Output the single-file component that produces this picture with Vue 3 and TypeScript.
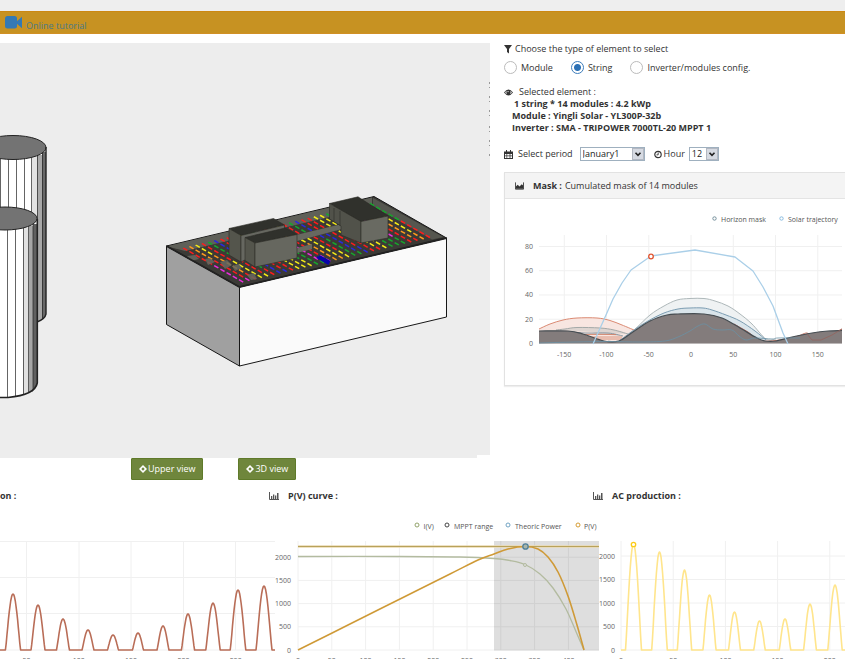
<script setup lang="ts">
import { ref } from 'vue'

type Point = [number, number]
interface Peak { x: number; top: number; half: number }

const elementType = ref('string')
const period = ref('January1')
const hour = ref('12')

const types = [
  { value: 'module', label: 'Module' },
  { value: 'string', label: 'String' },
  { value: 'inverter', label: 'Inverter/modules config.' },
]

// Smooth path through points (Catmull-Rom converted to Bezier segments)
function smooth(pts: Point[]): string {
  let d = `M${pts[0][0]} ${pts[0][1]}`
  for (let i = 0; i < pts.length - 1; i++) {
    const a = pts[Math.max(i - 1, 0)]
    const b = pts[i]
    const c = pts[i + 1]
    const e = pts[Math.min(i + 2, pts.length - 1)]
    d += `C${b[0] + (c[0] - a[0]) / 6} ${b[1] + (c[1] - a[1]) / 6} ${c[0] - (e[0] - b[0]) / 6} ${c[1] - (e[1] - b[1]) / 6} ${c[0]} ${c[1]}`
  }
  return d
}

function production(start: number, end: number, base: number, peaks: Peak[]): string {
  let d = `M${start} ${base}`
  for (const p of peaks) {
    for (let k = -10; k <= 10; k++) {
      const t = k / 10
      const level = Math.pow(Math.max(Math.cos((t * Math.PI) / 2), 0), 1.15)
      d += `L${(p.x + t * p.half).toFixed(1)} ${(base - level * (base - p.top)).toFixed(1)}`
    }
  }
  return d + `L${end} ${base}`
}

const dcPath = production(0, 275, 650, [
  { x: 13, top: 594, half: 7.6 }, { x: 38, top: 605, half: 7 }, { x: 63, top: 619, half: 6.5 },
  { x: 88, top: 630, half: 6 }, { x: 113, top: 635, half: 5.6 }, { x: 138, top: 633, half: 5.6 },
  { x: 163, top: 626, half: 6 }, { x: 188, top: 614, half: 6.6 }, { x: 213, top: 603, half: 7.2 },
  { x: 238, top: 590, half: 7.8 }, { x: 264, top: 586, half: 8 },
])
const acPath = production(621, 845, 650, [
  { x: 633.5, top: 544, half: 8 }, { x: 659.5, top: 552, half: 7.8 }, { x: 684.5, top: 570, half: 7.2 },
  { x: 709.5, top: 595, half: 6.6 }, { x: 734.5, top: 612, half: 6 }, { x: 759.5, top: 621, half: 5.8 },
  { x: 785, top: 619, half: 5.8 }, { x: 810, top: 604, half: 6.4 }, { x: 835, top: 585, half: 7.2 },
])

const wattTicks = [0, 500, 1000, 1500, 2000]
const maskX = (v: number) => 691 + v * 0.845
const maskY = (v: number) => 343.5 - v * 1.213
const maskXTicks = [-150, -100, -50, 0, 50, 100, 150]
const maskYTicks = [0, 20, 40, 60, 80]

const darkMask = smooth([[539, 331], [568, 331], [583, 334], [604, 341], [619, 341], [630, 334], [650, 321], [667, 315], [678, 314], [704, 314], [722, 318], [740, 328], [757, 338], [765, 341], [776, 341], [792, 337], [812, 333], [828, 331], [842, 330.5]])
const grayMask = smooth([[608, 341], [619, 341], [634, 330], [650, 315], [664, 306], [677, 300], [690, 298.5], [704, 298.5], [715, 301], [728, 306], [740, 314], [752, 324], [766, 339], [776, 339]])
const blueMask = smooth([[619, 341], [634, 330], [648, 321], [664, 313], [678, 309], [690, 308], [703, 308], [712, 310], [726, 315], [740, 321], [755, 331], [766, 340]])
const orangeMask = smooth([[539, 329], [550, 324], [563, 320], [577, 318], [597, 318], [610, 320.5], [622, 325], [634, 330]])
const leftGray = smooth([[556, 330], [565, 329], [577, 327.5], [600, 328], [614, 330], [628, 334]])
const leftBlue = smooth([[560, 331], [585, 333], [608, 333], [623, 336]])
const lowTrack = smooth([[539, 343], [575, 342], [608, 341.5], [640, 342], [665, 341], [678, 337], [690, 331], [698, 326], [705, 324], [713, 329], [722, 330], [732, 330], [739, 336], [746, 340], [755, 338], [772, 339], [778, 338], [800, 338]])
const rightOrange = smooth([[734, 324], [748, 332], [762, 341], [792, 338], [807, 333], [812, 339], [821, 339], [832, 334], [842, 329]])

const currentPath = smooth([[298, 556.5], [400, 556.5], [460, 557], [494, 558.5], [510, 560.5], [525, 564.5], [540, 574], [553, 588], [566, 609], [577, 634], [584, 650]])
const powerPath = smooth([[298, 650], [350, 624], [400, 599], [450, 574], [478, 560], [494, 554], [508, 549], [525, 546.5], [538, 549], [548, 557], [558, 572], [568, 596], [577, 625], [584, 650]])

// Photovoltaic strings laid out over the roof parallelogram
const red = '#ff1c1c', yellow = '#f7ee16', green = '#16a82c', pink = '#ee2be0', blue = '#2a28e0', orange = '#ff9a1e'
const order = [red, yellow, red, green, red, orange, yellow, green, pink, red, yellow, green, blue]
const panels: { x1: number; y1: number; x2: number; y2: number; color: string }[] = []
for (let i = 0; i < 31; i++) {
  for (let j = 0; j < 10; j++) {
    const u = 0.045 + i * 0.03
    const v = 0.1 + j * 0.085
    const x = 166.5 + u * 207.5 + v * 73
    const y = 246 - u * 49.5 + v * 41.5
    const color = order[(i * 5 + Math.floor((j + (i % 3)) / 5) * 8) % order.length]
    panels.push({ x1: x, y1: y, x2: x + 4.2, y2: y + 2.4, color })
  }
}
</script>

<template>
  <div class="page">
    <div class="topstrip"></div>
    <header class="bar">
      <a href="#" class="tutorial">
        <svg class="cam" viewBox="0 0 18 13" aria-hidden="true"><rect x="0" y="0" width="12" height="12.5" rx="2.5" /><path d="M11 6 17 .8V12.2L11 7z" /></svg>
        <span>Online tutorial</span>
      </a>
    </header>

    <main class="main">
      <svg class="viewer" viewBox="0 43 490 415">
        <path d="M0 43H490V455H477V458H0z" fill="#ededed" />
        <path d="M489.500 82V124M489.500 126V156" stroke="#999" stroke-dasharray="2 3 1 8" />
        <g stroke="#222">
          <path d="M-20 147H46V313Q45 319 37 322H-20z" fill="#fff" stroke="none" />
          <path d="M32 156H37V322H32z" fill="#e2e2e2" stroke="none" />
          <path d="M37 155H42V320L37 322z" fill="#a8a8a8" stroke="none" />
          <path d="M42 152H46V314L42 320z" fill="#686868" stroke="none" />
          <path d="M.5 158V215M8.500 159V220M16.500 159V220M24.500 158V220M31.500 157V240M37.500 155V322M42.500 152V319" stroke-width=".7" fill="none" />
          <ellipse cx="13" cy="147.500" rx="33" ry="12" fill="#737373" />
          <path d="M46 147V314Q45 319 37 322" fill="none" stroke-width="1.400" />
          <path d="M-20 219H37V384Q34 395 8 398H-20z" fill="#fff" stroke="none" />
          <path d="M23 228H29V394H23z" fill="#e1e1e1" stroke="none" />
          <path d="M29 226H33V392H29z" fill="#a6a6a6" stroke="none" />
          <path d="M33 224H37V384L33 391z" fill="#606060" stroke="none" />
          <path d="M7.500 230V397M15.500 229V396M23.500 228V394M28.500 226V392M33 224V390" stroke-width=".7" fill="none" />
          <ellipse cx="5" cy="218.500" rx="32" ry="11.500" fill="#737373" />
          <path d="M37.300 219V383Q35 395 8 397.500H-5" fill="none" stroke-width="1.600" />
        </g>
        <g stroke="#171717" stroke-linejoin="round">
          <path d="M166.500 246 239.500 287V366L166.500 324.500z" fill="#a0a0a0" />
          <path d="M239.500 287 446.500 238V317L239.500 366z" fill="#fafafa" />
          <path d="M166.500 246 374 196.500 446.500 238 239.500 287z" fill="#3b3a36" />
        </g>
        <path d="M168 246.500 372 198V207L185 251z" fill="#5f6059" />
        <path d="M373 198 443 237 432 239.500 373 206z" fill="#55564f" />
        <line v-for="(p, i) in panels" :key="i" :x1="p.x1" :y1="p.y1" :x2="p.x2" :y2="p.y2" :stroke="p.color" stroke-width="1.500" />
        <path d="M168 246 372 197.500V202L178 249z" fill="#5f6059" />
        <g fill="#676860">
          <path d="M187 256 195 255 199 259 191 261zM205 259 210 258 215 262 208 265zM220 262 227 260 232 265 225 269zM232 266 239 264 242 268 235 271zM247 275 254 273 257 279 251 280z" opacity=".85" />
          <path d="M296 235 342 224V229L297 241z" />
          <path d="M297 248 312 244V249L297 253z" />
        </g>
        <path d="M317 257 329 264M319 256 330 262" stroke="#0804a8" stroke-width="2.500" />
        <g stroke="#2b2c27" stroke-width=".6" stroke-linejoin="round">
          <path d="M229 228.500 273.500 218.500 284.500 225 241 235.500z" fill="#30312c" />
          <path d="M229 228.500 241 235.500V262L229 255z" fill="#54554c" />
          <path d="M241 235.500 284.500 225V240L241 262z" fill="#666760" />
          <path d="M245 237.500 285 228 297 234.500 255 243z" fill="#30312c" />
          <path d="M245 237.500 255 243V267L245 260.500z" fill="#54554c" />
          <path d="M255 243 297 234.500V258L255 267z" fill="#66675f" />
          <path d="M329.500 203.500 358 196.800 388 216 361 221.500z" fill="#30312c" />
          <path d="M329.500 203.500 361 221.500V243L341 235V226L329.500 219z" fill="#51524a" />
          <path d="M361 221.500 388 216V238L361 243z" fill="#696a62" />
          <path d="M334 208V221M340 211V226" />
        </g>
        <path d="M166.500 246 239.500 287 446.500 238" fill="none" stroke="#222" stroke-width="1.800" />
      </svg>

      <section class="side">
        <fieldset class="types">
          <legend>
            <svg class="ico filter" viewBox="0 0 8 9" aria-hidden="true"><path d="M0 0H8L5 4V8.500L3 7V4z" /></svg>Choose the type of element to select
          </legend>
          <div class="radios">
            <label v-for="t in types" :key="t.value">
              <input v-model="elementType" type="radio" name="type" :value="t.value" />{{ t.label }}
            </label>
          </div>
        </fieldset>

        <div class="selected">
          <p class="caption">
            <svg class="ico eye" viewBox="0 0 10 7" aria-hidden="true"><path d="M0 3.500Q5-3 10 3.500Q5 10 0 3.500z" /><path d="M1.300 3.500Q2 2.300 3 1.800Q2.200 3.600 3.300 5.300Q2 4.700 1.300 3.500zM8.700 3.500Q8 2.300 7 1.800Q7.800 3.600 6.700 5.300Q8 4.700 8.700 3.500z" fill="#fff" /><circle cx="4.500" cy="2.500" r=".7" fill="#fff" /></svg>Selected element :
          </p>
          <p class="first">1 string * 14 modules : 4.2 kWp</p>
          <p>Module : Yingli Solar - YL300P-32b</p>
          <p>Inverter : SMA - TRIPOWER 7000TL-20 MPPT 1</p>
        </div>

        <div class="when">
          <svg class="ico cal" viewBox="0 0 9 9" aria-hidden="true"><path d="M0 1.500H9V9H0zM2 0H3V2H2zM6 0H7V2H6z" /><path d="M1 4H2.500V5.500H1zM3.200 4H5.600V5.500H3.200zM6.400 4H8V5.500H6.400zM1 6.300H2.500V8H1zM3.200 6.300H5.600V8H3.200zM6.400 6.300H8V8H6.400z" fill="#fff" /></svg>
          <label for="period">Select period</label>
          <span class="picker">
            <select id="period" v-model="period" class="period"><option>January1</option></select>
            <svg viewBox="0 0 12 12" aria-hidden="true"><path d="M3 4.500 6 7.500 9 4.500" /></svg>
          </span>
          <svg class="ico clock" viewBox="0 0 9 9" aria-hidden="true"><circle cx="4.500" cy="4.500" r="3.600" fill="none" stroke="#333" stroke-width="1.300" /><path d="M4.700 2.200V4.900H2.800" fill="none" stroke="#333" /></svg>
          <label for="hour" class="hourlabel">Hour</label>
          <span class="picker">
            <select id="hour" v-model="hour" class="hour"><option>12</option></select>
            <svg viewBox="0 0 12 12" aria-hidden="true"><path d="M3 4.500 6 7.500 9 4.500" /></svg>
          </span>
        </div>

        <article class="panel">
          <h2>
            <svg class="ico pic" viewBox="0 0 10 8" aria-hidden="true"><path d="M.5 0V7.500H9.500V0" fill="none" stroke="#333" /><path d="M1 7V4.500L3 2.500 5 4.500 7.500 2 9 3.500V7z" /></svg>
            <b>Mask :</b><span>Cumulated mask of 14 modules</span>
          </h2>
          <svg class="chart" viewBox="505 199 340 186">
            <g class="grid">
              <path v-for="v in maskXTicks" :key="v" :d="`M${maskX(v)} 235V343`" />
              <path v-for="v in maskYTicks" :key="v" :d="`M539 ${maskY(v)}H842`" />
            </g>
            <g class="ticks">
              <text v-for="v in maskYTicks" :key="v" x="533" :y="maskY(v) + 2.500" text-anchor="end">{{ v }}</text>
              <text v-for="v in maskXTicks" :key="v" :x="maskX(v)" y="357" text-anchor="middle">{{ v }}</text>
            </g>
            <g stroke-linejoin="round">
              <path :d="orangeMask + 'V343H539z'" fill="#f8e6e1" />
              <path :d="orangeMask" fill="none" stroke="#db8a73" />
              <path :d="leftGray" fill="#ded5d1" stroke="#a4a9a8" />
              <path :d="leftBlue" fill="#d6c4be" stroke="#8d9ba5" />
              <path d="M583 334.500H616M590 337H622M597 339H622" fill="none" stroke="#d07d63" stroke-width=".8" />
              <path :d="grayMask + 'V343H608z'" fill="#eff2f3" />
              <path :d="grayMask" fill="none" stroke="#aeb8ba" />
              <path :d="blueMask + 'V343H619z'" fill="#d9e4ea" />
              <path :d="blueMask" fill="none" stroke="#7c9db2" />
              <path :d="rightOrange" fill="none" stroke="#c56e5c" />
              <path :d="darkMask + 'V343.500H539z'" fill="#837c7c" />
              <path :d="darkMask" fill="none" stroke="#464d52" stroke-width="1.200" />
              <path d="M807 334 812 340H821L832 335 842 329" fill="none" stroke="#94635d" stroke-width=".8" />
              <path :d="lowTrack" fill="none" stroke="#6990a5" stroke-width=".8" />
              <path d="M593 344 606 315 613 299 622 283 631 270 651 256 695 250 735 257 753 271 763 287 773 306 783 333 788 344" fill="none" stroke="#aacfe8" stroke-width="1.300" />
            </g>
            <circle cx="651" cy="256.500" r="2.300" fill="#fff" stroke="#e1532f" stroke-width="1.300" />
            <g class="legend">
              <circle cx="714.500" cy="218.500" r="1.700" stroke="#76919d" /><text x="721" y="222">Horizon mask</text>
              <circle cx="781.500" cy="218.500" r="1.700" stroke="#8abce0" /><text x="788" y="222">Solar trajectory</text>
            </g>
          </svg>
        </article>
      </section>
    </main>

    <div class="actions">
      <button type="button"><svg class="move" viewBox="0 0 9 9" aria-hidden="true"><path d="M4.500 0 9 4.500 4.500 9 0 4.500z" /><path d="M4.500 2.600 6.400 4.500 4.500 6.400 2.600 4.500z" class="hole" /></svg>Upper view</button>
      <button type="button"><svg class="move" viewBox="0 0 9 9" aria-hidden="true"><path d="M4.500 0 9 4.500 4.500 9 0 4.500z" /><path d="M4.500 2.600 6.400 4.500 4.500 6.400 2.600 4.500z" class="hole" /></svg>3D view</button>
    </div>

    <div class="charts">
      <section>
        <h3>on :</h3>
        <svg class="chart" viewBox="0 504 269 168">
          <g class="grid"><path d="M0 541.500H275M0 577.500H275M0 613.500H275M0 650H275M26.500 541V650M79 541V650M131 541V650M183.500 541V650M235.500 541V650" /></g>
          <path :d="dcPath" fill="none" stroke="#b96d57" stroke-width="1.600" stroke-linejoin="round" />
          <g class="ticks"><text v-for="n in 5" :key="n" :x="26.500 + (n - 1) * 52.300" y="663" text-anchor="middle">{{ n * 50 }}</text></g>
        </svg>
      </section>
      <section>
        <h3><svg class="ico bars" viewBox="0 0 10 8" aria-hidden="true"><path d="M.5 0V7.500H10" fill="none" stroke="#555" /><path d="M2 4H3.300V7H2zM4 2.500H5.300V7H4zM6 3.500H7.300V7H6zM8 1H9.500V7H8z" /></svg>P(V) curve :</h3>
        <svg class="chart" viewBox="269 504 324 168">
          <g class="grid">
            <path v-for="n in 9" :key="n" :d="`M${298 + (n - 1) * 33.800} 541V650`" />
            <path v-for="v in wattTicks" :key="v" :d="`M298 ${650 - v * 0.0464}H599`" />
          </g>
          <rect x="494" y="541" width="105" height="109.500" fill="#000" opacity=".13" />
          <path :d="currentPath" fill="none" stroke="#b3bba0" stroke-width="1.300" />
          <path d="M298 546.500H599" stroke="#ead9b0" stroke-width="2.400" />
          <path d="M298 546.500H599" stroke="#b8a25a" stroke-width="1.200" />
          <path :d="powerPath" fill="none" stroke="#cf9a37" stroke-width="1.600" />
          <circle cx="525" cy="565" r="1.500" fill="#ddd" stroke="#b3bba0" />
          <circle cx="525.500" cy="546.500" r="2.700" fill="#a9b5a9" stroke="#4f7f98" stroke-width="1.300" />
          <g class="ticks">
            <text v-for="v in wattTicks" :key="v" x="291" :y="652.500 - v * 0.0464" text-anchor="end">{{ v }}</text>
            <text v-for="n in 9" :key="'x' + n" :x="298 + (n - 1) * 33.800" y="663" text-anchor="middle">{{ (n - 1) * 50 }}</text>
          </g>
          <g class="legend">
            <circle cx="417" cy="525" r="2" stroke="#93a36b" /><text x="423.500" y="529">I(V)</text>
            <circle cx="447" cy="525" r="2" stroke="#444" /><text x="454" y="529">MPPT range</text>
            <circle cx="508" cy="525" r="2" stroke="#72a4c4" /><text x="515" y="529">Theoric Power</text>
            <circle cx="578" cy="525" r="2" stroke="#d69d34" /><text x="584" y="529">P(V)</text>
          </g>
        </svg>
      </section>
      <section>
        <h3><svg class="ico bars" viewBox="0 0 10 8" aria-hidden="true"><path d="M.5 0V7.500H10" fill="none" stroke="#555" /><path d="M2 4H3.300V7H2zM4 2.500H5.300V7H4zM6 3.500H7.300V7H6zM8 1H9.500V7H8z" /></svg>AC production :</h3>
        <svg class="chart" viewBox="593 504 252 168">
          <g class="grid">
            <path v-for="n in 5" :key="n" :d="`M${621 + (n - 1) * 52.200} 541V650`" />
            <path v-for="v in wattTicks" :key="v" :d="`M621 ${650 - v * 0.047}H845`" />
          </g>
          <path :d="acPath" fill="none" stroke="#ffe58c" stroke-width="1.600" stroke-linejoin="round" />
          <circle cx="633.500" cy="544.500" r="2.200" fill="#fff" stroke="#fccb18" stroke-width="1.300" />
          <g class="ticks">
            <text v-for="v in wattTicks" :key="v" x="615" :y="652.500 - v * 0.047" text-anchor="end">{{ v }}</text>
            <text v-for="n in 5" :key="'x' + n" :x="621 + (n - 1) * 52.200" y="663" text-anchor="middle">{{ (n - 1) * 50 }}</text>
          </g>
        </svg>
      </section>
    </div>
  </div>
</template>

<style>
body { margin: 0; background: #fff; overflow: hidden; }
</style>

<style scoped>
* { box-sizing: border-box; }
.page { height: 100vh; overflow: hidden; background: #fff; color: #333; font: 9px/12px "Open Sans", "Noto Sans", sans-serif; }
.topstrip { height: 11px; background: #eee; }
.bar { height: 23px; background: #c79222; border-top: 1px solid #cc8812; border-bottom: 1px solid #d19024; padding: 4px 5px; }
.tutorial { display: flex; align-items: flex-start; gap: 3px; color: #4a7a8a; text-decoration: none; }
.tutorial span { padding-top: 4px; }
.cam { width: 18px; height: 13px; fill: #3479b4; }
.main { display: grid; grid-template-columns: 490fr 355fr; align-items: start; padding-top: 9px; }
.viewer { display: block; width: 100%; }
.side { padding-left: 14px; min-width: 0; }
.ico { fill: #333; flex: none; }
.types { border: 0; margin: 0; padding: 0; }
.types legend { display: flex; align-items: center; gap: 3px; padding: 0; }
.filter { width: 8px; height: 9px; }
.radios { display: flex; gap: 18px; padding-top: 6px; }
.radios label { display: flex; align-items: center; gap: 4px; }
.radios input { appearance: none; width: 13px; height: 13px; margin: 0; border: 1px solid #bbb; border-radius: 50%; background: #fff; }
.radios input:checked { border-color: #3d7dbb; background: radial-gradient(circle, #2b70b5 0 3px, #fff 4px); }
.selected { padding-top: 12px; font-weight: 700; }
.selected p { margin: 0; padding-left: 8px; }
.selected .caption { display: flex; align-items: center; gap: 6px; padding-left: 0; font-weight: 400; }
.selected .first { padding-left: 10px; }
.eye { width: 9px; height: 7px; }
.when { display: flex; align-items: center; padding-top: 13px; }
.cal { width: 9px; height: 9px; margin-right: 5px; }
.clock { width: 8px; height: 9px; margin: 0 2px 0 9px; }
.picker { position: relative; display: block; margin-left: 7px; }
.hourlabel + .picker { margin-left: 4px; }
.picker select { appearance: none; display: block; height: 14px; margin: 0; padding: 0 2px; border: 1px solid #9fb0bf; border-radius: 0; background: #fff; color: #222; font: inherit; line-height: 12px; }
.picker svg { position: absolute; top: 1px; right: 1px; width: 12px; height: 12px; background: #d6dae2; border: 1px solid #b3b8c2; fill: none; stroke: #222; stroke-width: 2; pointer-events: none; }
.period { width: 65px; }
.hour { width: 30px; }
.panel { margin-top: 11px; border: 1px solid #e2e2e2; border-right: 0; box-shadow: 0 1px 1px #eee; }
.panel h2 { display: flex; align-items: center; height: 26px; margin: 0; padding-left: 10px; background: #f4f4f4; border-bottom: 1px solid #e4e4e4; font: inherit; }
.pic { width: 9px; height: 8px; margin-right: 9px; }
.panel b { margin-right: 3px; }
.chart { display: block; width: 100%; overflow: visible; }
.grid { stroke: #f0f0f0; fill: none; }
.ticks { font-size: 7px; fill: #666; }
.legend { font-size: 7px; fill: #555; }
.legend circle { fill: #fff; }
.actions { display: flex; gap: 35px; padding-left: 131px; }
.actions button { display: flex; align-items: center; gap: 1px; height: 22px; margin: 0; padding: 0 7px; border: 1px solid #5f7a2a; border-radius: 1px; background: #6f863c; color: #fff; font: inherit; }
.move { width: 8px; height: 8px; fill: #fff; }
.hole { fill: #6f863c; }
.charts { display: grid; grid-template-columns: 269fr 324fr 252fr; padding-top: 9px; }
.charts section { min-width: 0; }
.charts h3 { display: flex; align-items: center; gap: 9px; height: 14px; margin: 0 0 1px; font: inherit; font-weight: 700; }
.bars { width: 10px; height: 8px; fill: #555; }
</style>
